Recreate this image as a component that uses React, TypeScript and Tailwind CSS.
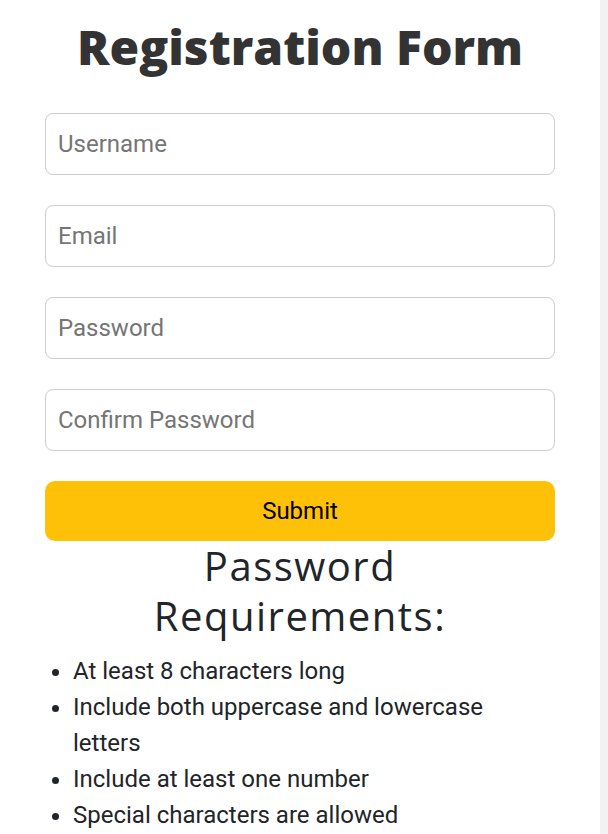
import React from "react";

const fields = ["Username", "Email", "Password", "Confirm Password"];

const rules = [
  "At least 8 characters long",
  "Include both uppercase and lowercase letters",
  "Include at least one number",
  "Special characters are allowed",
];

export default function App() {
  return (
    <div className="min-h-screen bg-[#f2f2f2]">
      <div className="w-[600px] min-h-screen bg-white px-[45px] pt-[12px] pb-10 font-['Roboto',sans-serif]">
        {/* Title */}
        <h1 className="text-center text-[48px] leading-[70px] font-extrabold text-[#333333] font-['Open_Sans','Lato',sans-serif] mb-[31px]">
          Registration Form
        </h1>

        {/* Form */}
        <form className="flex flex-col gap-[30px]">
          {fields.map((f) => (
            <input
              key={f}
              type={f.includes("Password") ? "password" : "text"}
              placeholder={f}
              className="h-[62px] w-full rounded-[8px] border border-[#cccccc] px-[12px] text-[24px] text-[#333] placeholder:text-[#757575] outline-none"
            />
          ))}
          <button
            type="button"
            className="h-[60px] w-full rounded-[10px] bg-[#ffc107] text-[24px] font-normal text-black"
          >
            Submit
          </button>
        </form>

        {/* Requirements */}
        <h2 className="text-center text-[40px] leading-[50px] tracking-[1.5px] text-[#212529] font-['Open_Sans','Lato',sans-serif]">
          Password
          <br />
          Requirements:
        </h2>
        <ul className="mt-[12px] list-disc pl-[28px] text-[24px] leading-[36px] text-[#212529]">
          {rules.map((r) => (
            <li key={r}>{r}</li>
          ))}
        </ul>
      </div>
    </div>
  );
}
